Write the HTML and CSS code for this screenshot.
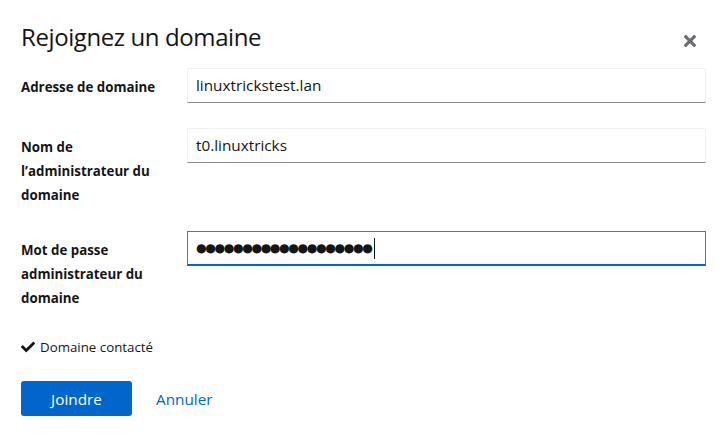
FILE: index.html
```html
<!DOCTYPE html>
<html lang="fr">
<head>
<meta charset="utf-8">
<link rel="stylesheet" href="styles.css">
</head>
<body>
<div class="modal">
  <header class="modal-header">
    <h1 class="modal-title">Rejoignez un domaine</h1>
    <button class="close-btn" aria-label="Fermer">
      <svg viewBox="0 80 352 352" width="12" height="12"><path fill="currentColor" d="M242.72 256l100.07-100.07c12.28-12.280 12.28-32.19 0-44.48l-22.24-22.24c-12.28-12.28-32.19-12.28-44.48 0L176 189.28 75.930 89.21c-12.28-12.28-32.19-12.28-44.48 0L9.21 111.450c-12.28 12.28-12.28 32.19 0 44.48L109.28 256 9.21 356.07c-12.28 12.28-12.28 32.19 0 44.48l22.24 22.24c12.28 12.28 32.2 12.28 44.48 0L176 322.72l100.07 100.07c12.28 12.28 32.2 12.28 44.48 0l22.24-22.240c12.28-12.28 12.28-32.19 0-44.48L242.72 256z"/></svg>
    </button>
  </header>
  <form class="form">
    <div class="row">
      <label class="label">Adresse de domaine</label>
      <div class="input">linuxtrickstest.lan</div>
    </div>
    <div class="row">
      <label class="label">Nom de l’administrateur du domaine</label>
      <div class="input">t0.linuxtricks</div>
    </div>
    <div class="row">
      <label class="label">Mot de passe administrateur du domaine</label>
      <div class="input focused"><span class="dots">●●●●●●●●●●●●●●●●●●●</span><span class="caret"></span></div>
    </div>
  </form>
  <div class="status">
    <svg class="check" viewBox="0 0 512 512" width="14" height="14"><path fill="currentColor" d="M173.898 439.404l-166.4-166.4c-9.997-9.997-9.997-26.206 0-36.204l36.203-36.204c9.997-9.998 26.207-9.998 36.204 0L192 312.69 432.095 72.596c9.997-9.997 26.207-9.997 36.204 0l36.203 36.204c9.997 9.997 9.997 26.206 0 36.204l-294.4 294.401c-9.998 9.997-26.207 9.997-36.204-.001z"/></svg>
    <span>Domaine contacté</span>
  </div>
  <footer class="footer">
    <button class="btn primary">Joindre</button>
    <button class="btn link">Annuler</button>
  </footer>
</div>
</body>
</html>
```
FILE: styles.css
```css
* { box-sizing: border-box; }
html, body { margin: 0; background: #fff; }
body { font-family: "Open Sans", "Noto Sans", sans-serif; color: #151515; }
.modal { padding: 21px 18px 0 21px; }
.modal-header { display: flex; align-items: center; justify-content: space-between; height: 32px; }
.modal-title { margin: 0; font-size: 24px; font-weight: 400; line-height: 32px; letter-spacing: -0.4px; }
.close-btn { border: 0; background: none; padding: 0; margin-right: 10px; margin-top: 8px; color: #6a6e73; display: flex; }
.form { margin-top: 15px; display: flex; flex-direction: column; gap: 25px; }
.row { display: grid; grid-template-columns: 150px 1fr; column-gap: 16px; align-items: start; }
.row + .row + .row { margin-top: -1px; }
.label { font-size: 13.3px; font-weight: 700; line-height: 24px; padding-top: 7px; }
.input { height: 35px; border: 1px solid #f0f0f0; border-bottom-color: #8a8d90; padding: 0 8px; font-size: 15.3px; line-height: 33px; color: #151515; display: flex; align-items: center; }
.input.focused { border-color: #2b7fd8; border-bottom: 2px solid #06c; }
.dots { font-family: "DejaVu Sans", sans-serif; font-size: 12.2px; letter-spacing: -1.4px; }
.caret { width: 1px; height: 21px; background: #151515; margin-left: 3px; }
.status { margin-top: 27px; display: flex; align-items: center; gap: 5px; font-size: 13.3px; color: #151515; height: 20px; }
.check { color: #151515; }
.footer { margin-top: 24px; display: flex; align-items: center; gap: 8px; }
.btn { font-family: inherit; font-size: 15.3px; border: 0; border-radius: 3px; height: 35px; padding: 0 16px; cursor: pointer; }
.btn.primary { background: #06c; color: #fff; width: 111px; }
.btn.link { background: none; color: #06c; }
```
